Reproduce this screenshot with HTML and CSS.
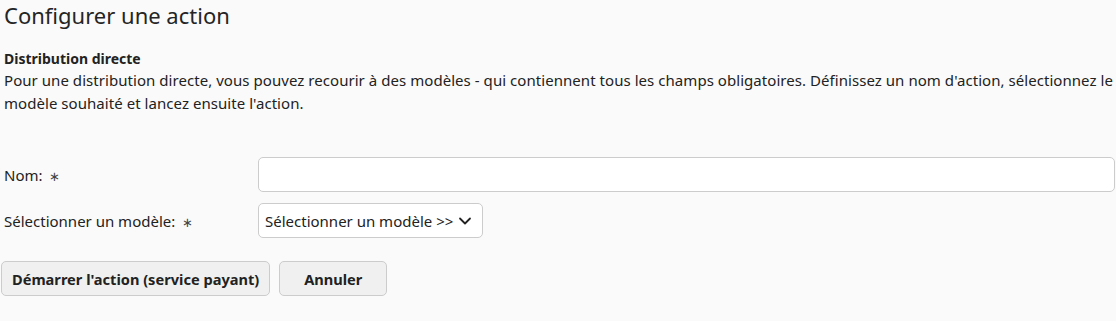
FILE: index.html
```html
<!DOCTYPE html>
<html lang="fr">
<head>
  <meta charset="UTF-8">
  <title>Configurer une action</title>
  <link rel="stylesheet" href="styles.css">
</head>
<body>

  <h1>Configurer une action</h1>

  <div class="intro">
    <h2>Distribution directe</h2>
    <p>Pour une distribution directe, vous pouvez recourir à des modèles - qui contiennent tous les champs obligatoires. Définissez un nom d'action, sélectionnez le modèle souhaité et lancez ensuite l'action.</p>
  </div>

  <form class="action-form">
    <div class="row">
      <label for="actionName">Nom: <span class="req">∗</span></label>
      <input type="text" id="actionName" class="field">
    </div>
    <div class="row">
      <label for="template">Sélectionner un modèle: <span class="req">∗</span></label>
      <div class="select">
        <span>Sélectionner un modèle &gt;&gt;</span>
        <svg width="14" height="14" viewBox="0 0 14 14"><path d="M2 4.5 L7 9.5 L12 4.5" fill="none" stroke="#222" stroke-width="1.8" stroke-linecap="round" stroke-linejoin="round"/></svg>
      </div>
    </div>

    <div class="buttons">
      <button type="button" class="btn">Démarrer l'action (service payant)</button>
      <button type="button" class="btn btn-cancel">Annuler</button>
    </div>
  </form>

</body>
</html>
```

FILE: styles.css
```css
body {
  margin: 0;
  padding: 0 0 0 4px;
  background-color: #fafafa;
  color: #222;
  font-family: "Noto Sans", sans-serif;
  font-size: 15px;
}
h1 {
  margin: 0;
  padding-top: 1px;
  font-size: 22px;
  font-weight: 400;
  line-height: 28px;
  color: #252525;
}
.intro {
  margin-top: 20px;
}
.intro h2 {
  margin: 0;
  font-size: 14px;
  font-weight: 700;
  line-height: 20px;
}
.intro p {
  margin: 0;
  line-height: 23px;
  letter-spacing: 0.05px;
}
.action-form {
  margin-top: 42px;
}
.row {
  display: grid;
  grid-template-columns: 254px 1fr;
  align-items: center;
  margin-bottom: 11px;
}
.req {
  margin-left: 3px;
  font-size: 13px;
  color: #444;
}
.field {
  height: 35px;
  box-sizing: border-box;
  border: 1px solid #ccc;
  border-radius: 5px;
  background: #fff;
  margin-right: 1px;
}
.select {
  justify-self: start;
  display: flex;
  align-items: center;
  gap: 5px;
  height: 35px;
  box-sizing: border-box;
  padding: 0 10px 0 6px;
  border: 1px solid #ccc;
  border-radius: 5px;
  background: #fff;
}
.buttons {
  display: flex;
  gap: 9px;
  margin-top: 23px;
  margin-left: -3px;
}
.btn {
  height: 35px;
  padding: 0 10px;
  border: 1px solid #ccc;
  border-radius: 5px;
  background-color: #f0f0f0;
  color: #222;
  font-family: "Noto Sans", sans-serif;
  font-size: 14.6px;
  font-weight: 700;
  cursor: pointer;
}
.btn-cancel {
  width: 108px;
}
```
